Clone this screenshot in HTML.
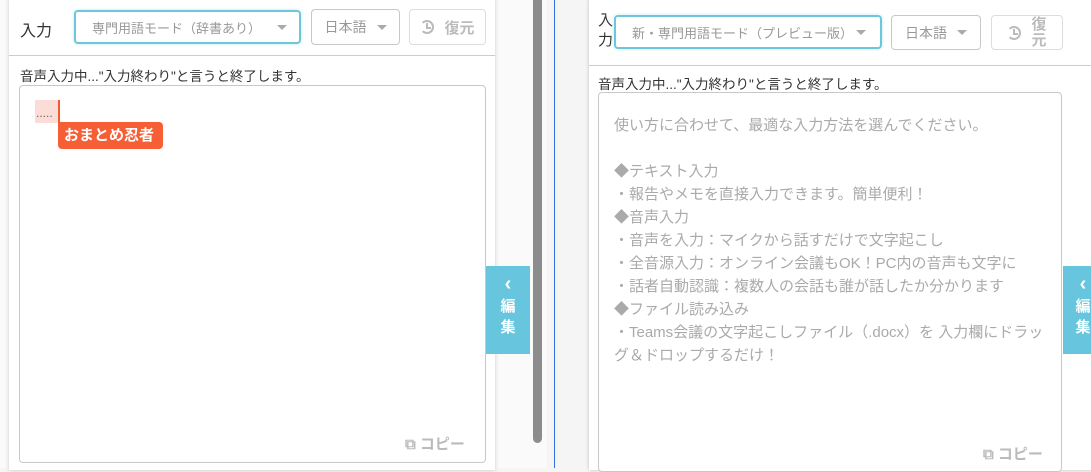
<!DOCTYPE html>
<html><head><meta charset="utf-8"><style>
*{box-sizing:border-box;margin:0;padding:0}
body{width:1091px;height:468px;overflow:hidden;background:#f5f5f5;position:relative;font-family:"Liberation Sans","Noto Sans CJK JP",sans-serif;color:#444}
.a{position:absolute}
.card{background:#fff;box-shadow:0 0 4px rgba(0,0,0,.2)}
.sel{border:2px solid #6cc6dc;border-radius:4px;color:#999;font-size:13px;display:flex;align-items:center;padding-left:16px;box-shadow:0 0 3px #bfe7f1}
.btn{border:1px solid #c8c8c8;border-radius:4px;color:#999;font-size:14px;display:flex;align-items:center;justify-content:center;background:#fff}
.tri{display:inline-block;border-left:5px solid transparent;border-right:5px solid transparent;border-top:5px solid #aaa;margin-left:10px}
.box{border:1px solid #c8c8c8;border-radius:4px;background:#fff}
.lbl{font-size:13.5px;color:#333}
.tab{background:#67c6dd;color:#fff;font-size:15px;font-weight:bold;text-align:center;line-height:21px}
.copy{color:#bbb;font-size:15px;font-weight:bold}
.txt{font-size:15px;color:#aaa;line-height:23px}
.hist{display:inline-block;width:14px;height:14px;border:2px solid #bbb;border-radius:50%;border-left-color:transparent;position:relative;margin-right:10px}
.hist:after{content:"";position:absolute;left:4px;top:1px;width:3px;height:4px;border-left:2px solid #bbb;border-bottom:2px solid #bbb}
</style></head><body>
<div class="a" style="left:0;top:0;width:547px;height:468px;background:#fafafa"></div>
<div class="a card" style="left:9px;top:-2px;width:486px;height:472px"></div>
<div class="a" style="left:20px;top:17px;font-size:16px;color:#333">入力</div>
<div class="a sel" style="left:74px;top:10px;width:227px;height:34px">専門用語モード（辞書あり）<span class="tri" style="margin-left:16px"></span></div>
<div class="a btn" style="left:311px;top:9px;width:89px;height:36px">日本語<span class="tri"></span></div>
<div class="a btn" style="left:409px;top:9px;width:77px;height:36px;border-color:#ddd;font-weight:bold;font-size:15px;color:#bbb"><span class="hist"></span>復元</div>
<div class="a" style="left:9px;top:55px;width:486px;height:1px;background:#ccc"></div>
<div class="a lbl" style="left:20px;top:65px">音声入力中..."入力終わり"と言うと終了します。</div>
<div class="a box" style="left:19px;top:85px;width:467px;height:378px"></div>
<div class="a" style="left:35px;top:100px;width:23px;height:23px;background:#fbdcd6;font-size:12px;color:#666;line-height:26px;padding-left:1px">.....</div>
<div class="a" style="left:58px;top:100px;width:2px;height:27px;background:#f15a2e"></div>
<div class="a" style="left:58px;top:122px;width:105px;height:27px;background:#f65e36;border-radius:0 4px 4px 4px;color:#fff;font-weight:bold;font-size:15px;line-height:27px;padding-left:6px">おまとめ忍者</div>
<div class="a copy" style="left:405px;top:433px">⧉ コピー</div>
<div class="a tab" style="left:486px;top:266px;width:44px;height:88px;padding-top:8px"><span style="font-size:20px">‹</span><br>編<br>集</div>
<div class="a" style="left:533px;top:0;width:9px;height:443px;background:#8c8c8c;border-radius:0 0 5px 5px"></div>
<div class="a" style="left:554px;top:0;width:1px;height:468px;background:#3a6fe0"></div>
<div class="a card" style="left:589px;top:-2px;width:510px;height:472px"></div>
<div class="a" style="left:598px;top:11px;font-size:15px;color:#333;line-height:20px">入<br>力</div>
<div class="a sel" style="left:614px;top:15px;width:268px;height:34px">新・専門用語モード（プレビュー版）<span class="tri" style="margin-left:3px"></span></div>
<div class="a btn" style="left:891px;top:15px;width:90px;height:35px">日本語<span class="tri"></span></div>
<div class="a btn" style="left:991px;top:15px;width:72px;height:35px;border-color:#ddd;color:#bbb;font-weight:bold;font-size:15px"><span class="hist"></span><span style="line-height:16px">復<br>元</span></div>
<div class="a" style="left:589px;top:65px;width:502px;height:1px;background:#ccc"></div>
<div class="a lbl" style="left:598px;top:73px">音声入力中..."入力終わり"と言うと終了します。</div>
<div class="a box" style="left:598px;top:92px;width:464px;height:380px"></div>
<div class="a txt" style="left:614px;top:114px;width:440px">使い方に合わせて、最適な入力方法を選んでください。<br><br>◆テキスト入力<br>・報告やメモを直接入力できます。簡単便利！<br>◆音声入力<br>・音声を入力：マイクから話すだけで文字起こし<br>・全音源入力：オンライン会議もOK！PC内の音声も文字に<br>・話者自動認識：複数人の会話も誰が話したか分かります<br>◆ファイル読み込み<br>・Teams会議の文字起こしファイル（.docx）を 入力欄にドラッグ＆ドロップするだけ！</div>
<div class="a copy" style="left:983px;top:443px">⧉ コピー</div>
<div class="a tab" style="left:1063px;top:266px;width:40px;height:88px;padding-top:8px"><span style="font-size:20px">‹</span><br>編<br>集</div>
</body></html>
